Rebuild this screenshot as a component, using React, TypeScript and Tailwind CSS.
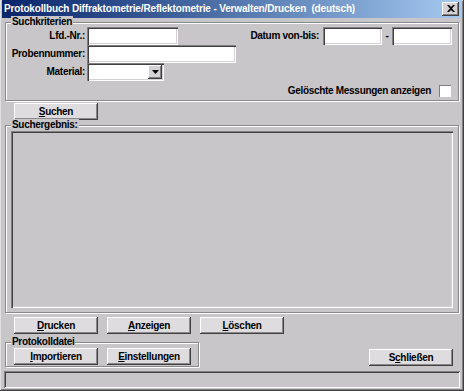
import React from "react";

const font = { fontFamily: '"Liberation Sans", Arial, sans-serif' };

function Btn({ pre, acc, post, w = "w-[84px]" }: { pre?: string; acc: string; post: string; w?: string }) {
  return (
    <div
      className={`${w} h-[17px] bg-[#dedcde] flex items-center justify-center text-[10px] tracking-[-0.3px] font-bold text-black leading-none shadow-[inset_-1px_-1px_0_#404040,inset_1px_1px_0_#ffffff,inset_-2px_-2px_0_#8a888a]`}
    >
      <span>
        {pre}
        <span className="underline underline-offset-1">{acc}</span>
        {post}
      </span>
    </div>
  );
}

function Input({ w }: { w: string }) {
  return (
    <div
      className={`${w} h-[18px] bg-white shadow-[inset_1px_1px_0_#808080,inset_2px_2px_0_#404040,inset_-1px_-1px_0_#ffffff,inset_-2px_-2px_0_#d4d0d4]`}
    />
  );
}

function Group({ label, className, children }: { label: string; className?: string; children?: React.ReactNode }) {
  return (
    <div
      className={`relative border border-[#8a888a] shadow-[inset_1px_1px_0_#ffffff,1px_1px_0_#ffffff] ${className ?? ""}`}
    >
      <span className="absolute left-[5px] top-[-7px] bg-[#c9c6c9] px-[1px] text-[10px] tracking-[-0.3px] font-bold leading-[12px] text-black">
        {label}
      </span>
      {children}
    </div>
  );
}

export default function App() {
  return (
    <div
      style={font}
      className="w-[464px] h-[391px] bg-[#c9c6c9] flex flex-col px-[2px] pb-[3px] shadow-[inset_-1px_-1px_0_#404040,inset_1px_1px_0_#e0e0e0,inset_-2px_-2px_0_#808080]"
    >
      {/* Title bar */}
      <div className="h-[18px] flex items-center justify-between bg-gradient-to-r from-[#0a246a] to-[#a6caf0] pl-[2px] pr-[3px]">
        <span className="text-white font-bold text-[10px] leading-none whitespace-pre tracking-[-0.15px]">
          Protokollbuch Diffraktometrie/Reflektometrie - Verwalten/Drucken  (deutsch)
        </span>
        <div className="w-[17px] h-[14px] bg-[#d4d0d4] flex items-center justify-center shadow-[inset_-1px_-1px_0_#404040,inset_1px_1px_0_#ffffff,inset_-2px_-2px_0_#808080]">
          <svg width="8" height="7" viewBox="0 0 8 7">
            <path d="M0 0h2l2 2 2-2h2L5 3.5 8 7H6L4 5 2 7H0l3-3.5z" fill="#000" />
          </svg>
        </div>
      </div>

      {/* Suchkriterien */}
      <Group label="Suchkriterien" className="mt-[4px] ml-[3px] mr-[3px] h-[80px]">
        <div className="flex flex-col pt-[4px] text-[10px] tracking-[-0.3px] font-bold text-black">
          <div className="flex items-center h-[18px]">
            <div className="w-[79px] text-right">Lfd.-Nr.:</div>
            <div className="ml-[2px]">
              <Input w="w-[91px]" />
            </div>
            <div className="flex-1" />
            <div>Datum von-bis:</div>
            <div className="ml-[4px]">
              <Input w="w-[59px]" />
            </div>
            <div className="w-[10px] text-center">-</div>
            <div>
              <Input w="w-[60px]" />
            </div>
            <div className="w-[6px]" />
          </div>
          <div className="flex items-center h-[18px]">
            <div className="w-[79px] text-right whitespace-nowrap">Probennummer:</div>
            <div className="ml-[2px]">
              <Input w="w-[149px]" />
            </div>
          </div>
          <div className="flex items-center h-[18px]">
            <div className="w-[79px] text-right">Material:</div>
            <div className="ml-[2px] relative w-[77px] h-[18px] bg-white shadow-[inset_1px_1px_0_#808080,inset_2px_2px_0_#404040,inset_-1px_-1px_0_#ffffff,inset_-2px_-2px_0_#d4d0d4] flex justify-end items-center pr-[2px]">
              <div className="w-[14px] h-[14px] bg-[#d4d0d4] flex items-center justify-center shadow-[inset_-1px_-1px_0_#404040,inset_1px_1px_0_#ffffff,inset_-2px_-2px_0_#808080]">
                <svg width="7" height="4" viewBox="0 0 7 4">
                  <path d="M0 0h7L3.5 4z" fill="#000" />
                </svg>
              </div>
            </div>
          </div>
          <div className="flex items-center justify-end h-[18px] mt-[1px] pr-[7px]">
            <span>Gelöschte Messungen anzeigen</span>
            <div className="ml-[8px] w-[12px] h-[12px] bg-white shadow-[inset_1px_1px_0_#808080,inset_-1px_-1px_0_#ffffff]" />
          </div>
        </div>
      </Group>

      <div className="mt-[2px] ml-[12px]">
        <Btn acc="S" post="uchen" />
      </div>

      {/* Suchergebnis */}
      <Group label="Suchergebnis:" className="mt-[5px] ml-[3px] mr-[3px] h-[189px] px-[5px] pt-[5px] pb-[4px]">
        <div className="w-full h-full bg-[#c9c6c9] shadow-[inset_1px_1px_0_#808080,inset_2px_2px_0_#404040,inset_-1px_-1px_0_#ffffff,inset_-2px_-2px_0_#d4d0d4]" />
      </Group>

      <div className="flex gap-[9px] mt-[4px] ml-[12px]">
        <Btn acc="D" post="rucken" />
        <Btn acc="A" post="nzeigen" />
        <Btn acc="L" post="öschen" />
      </div>

      <div className="flex items-end mt-[8px] ml-[3px] mr-[3px]">
        <Group label="Protokolldatei" className="w-[194px] h-[25px] flex gap-[9px] pl-[8px] pt-[5px]">
          <Btn acc="I" post="mportieren" />
          <Btn acc="E" post="instellungen" />
        </Group>
        <div className="flex-1" />
        <div className="mb-[1px] mr-[6px]">
          <Btn pre="S" acc="c" post="hließen" />
        </div>
      </div>

      <div className="mt-[4px] mx-[2px] h-[17px] shadow-[inset_1px_1px_0_#808080,inset_-1px_-1px_0_#ffffff,inset_2px_2px_0_#404040]" />
    </div>
  );
}
